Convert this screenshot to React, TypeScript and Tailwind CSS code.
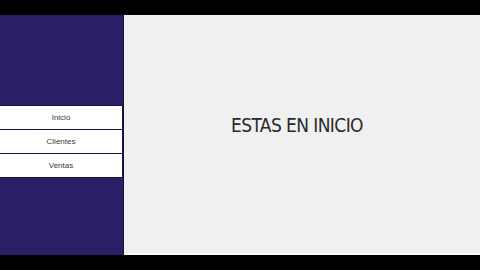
export default function App() {
  const items = ['Inicio', 'Clientes', 'Ventas']
  return (
    <div className="w-[480px] h-[270px] bg-black flex flex-col pt-[15px] pb-[15px]">
      <div className="flex flex-1">
        <aside className="w-[124px] bg-[#2a1f66] border-r border-[#14103a] flex flex-col justify-center pt-[13px]">
          <div className="flex flex-col gap-[1px] bg-[#1a1440] py-[1px]">
            {items.map((item) => (
              <button
                key={item}
                className="h-[23px] w-[122px] bg-white text-[8px] text-[#3a3a3a] font-['Liberation_Sans',sans-serif]"
              >
                {item}
              </button>
            ))}
          </div>
        </aside>
        <main className="flex-1 bg-[#f0f0f0] border-b-2 border-[#f8f8f8] flex items-center justify-center pr-[10px] pb-[17px]">
          <h1 className="text-[19px] leading-none tracking-[-0.6px] text-[#2a2a2a] font-['Liberation_Sans_Narrow','DejaVu_Sans_Condensed',sans-serif]">
            ESTAS EN INICIO
          </h1>
        </main>
      </div>
    </div>
  )
}
